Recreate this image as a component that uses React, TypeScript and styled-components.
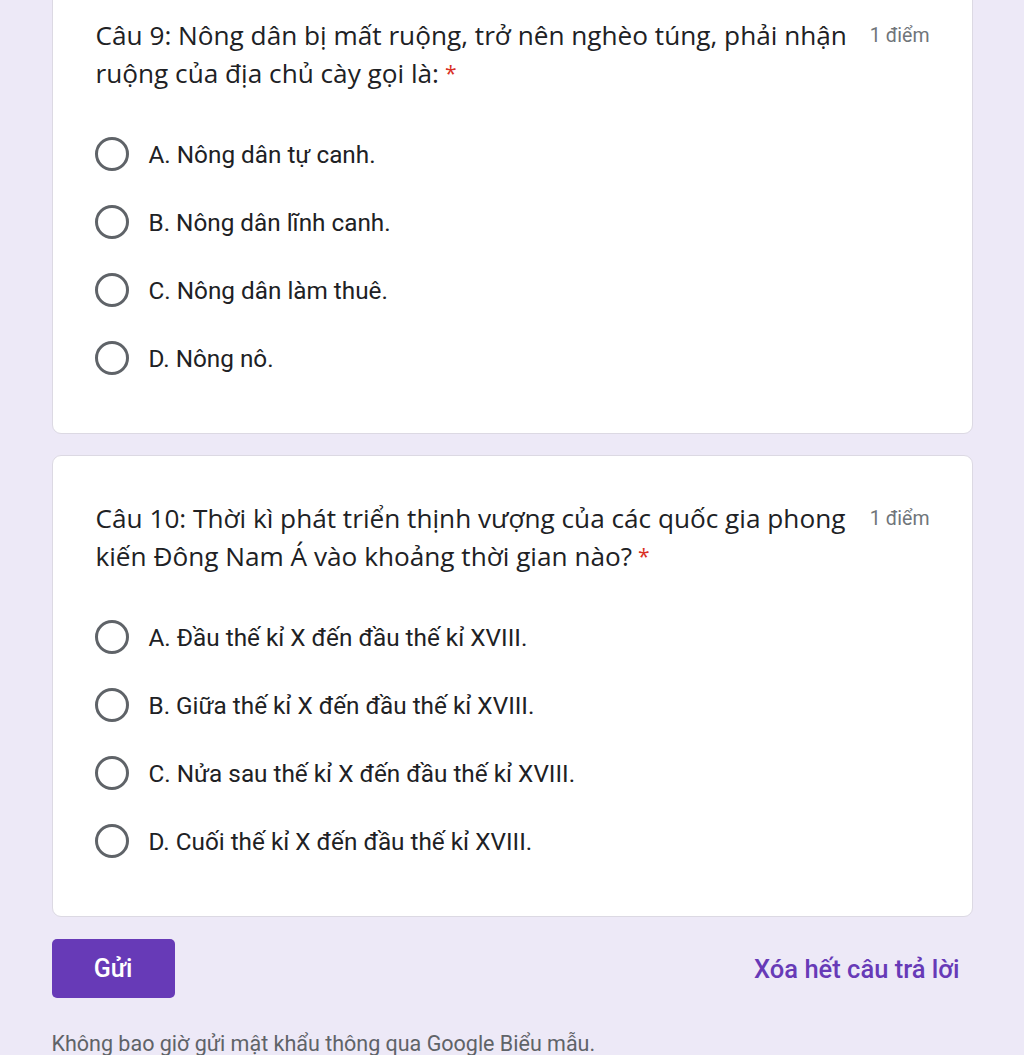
import React from "react";
import styled, { createGlobalStyle } from "styled-components";

const Global = createGlobalStyle`
  html, body { margin: 0; padding: 0; background: #ede9f7; }
  body { overflow: hidden; }
  * { box-sizing: border-box; }
`;

const Page = styled.div`
  width: 1024px;
  height: 1055px;
  overflow: hidden;
  background: #ede9f7;
`;

const Column = styled.div`
  width: 921px;
  margin: -28px auto 0;
  display: flex;
  flex-direction: column;
  gap: 21px;
`;

const Card = styled.section`
  background: #ffffff;
  border: 1px solid #dcd9e3;
  border-radius: 9px;
  padding: 43px 42px 41px 42px;
  display: flex;
  flex-direction: column;
  gap: 28px;
`;

const Header = styled.div`
  display: flex;
  align-items: flex-start;
  justify-content: space-between;
  gap: 14px;
`;

const Title = styled.div`
  flex: 1;
  font-family: "Open Sans", Lato, sans-serif;
  font-size: 26.2px;
  line-height: 38px;
  color: #202124;
  padding-left: 1px;
`;

const Required = styled.span`
  color: #d93025;
  margin-left: 6px;
  font-size: 21px;
  vertical-align: 2px;
`;

const Points = styled.div`
  font-family: Roboto, "Liberation Sans", sans-serif;
  font-size: 19.5px;
  line-height: 38px;
  color: #70757a;
  white-space: nowrap;
  padding-top: 1px;
`;

const Options = styled.div`
  display: flex;
  flex-direction: column;
`;

const Option = styled.label`
  height: 68px;
  display: flex;
  align-items: center;
  gap: 20px;
  cursor: pointer;
`;

const Radio = styled.span`
  width: 34px;
  height: 34px;
  border-radius: 50%;
  border: 3px solid #5f6368;
  flex: none;
`;

const OptionText = styled.span`
  font-family: Roboto, "Liberation Sans", sans-serif;
  font-size: 24.3px;
  color: #202124;
`;

const Actions = styled.div`
  margin-top: 1px;
  display: flex;
  align-items: center;
  justify-content: space-between;
  padding-right: 13px;
`;

const SubmitButton = styled.button`
  width: 123px;
  height: 59px;
  border: none;
  border-radius: 5px;
  background: #673ab7;
  color: #ffffff;
  font-family: Roboto, "Liberation Sans", sans-serif;
  font-size: 25px;
  font-weight: 500;
  cursor: pointer;
`;

const ClearLink = styled.span`
  font-family: Roboto, "Liberation Sans", sans-serif;
  font-size: 25.5px;
  font-weight: 500;
  color: #673ab7;
`;

const Footer = styled.div`
  margin-top: 26px;
  font-family: Roboto, "Liberation Sans", sans-serif;
  font-size: 21.5px;
  line-height: 40px;
  color: #5f6368;
`;

type Q = { title: string; options: string[] };

const questions: Q[] = [
  {
    title:
      "Câu 9: Nông dân bị mất ruộng, trở nên nghèo túng, phải nhận ruộng của địa chủ cày gọi là:",
    options: [
      "A. Nông dân tự canh.",
      "B. Nông dân lĩnh canh.",
      "C. Nông dân làm thuê.",
      "D. Nông nô.",
    ],
  },
  {
    title:
      "Câu 10: Thời kì phát triển thịnh vượng của các quốc gia phong kiến Đông Nam Á vào khoảng thời gian nào?",
    options: [
      "A. Đầu thế kỉ X đến đầu thế kỉ XVIII.",
      "B. Giữa thế kỉ X đến đầu thế kỉ XVIII.",
      "C. Nửa sau thế kỉ X đến đầu thế kỉ XVIII.",
      "D. Cuối thế kỉ X đến đầu thế kỉ XVIII.",
    ],
  },
];

export default function App() {
  return (
    <Page>
      <Global />
      <Column>
        {questions.map((q) => (
          <Card key={q.title}>
            <Header>
              <Title>
                {q.title}
                <Required>*</Required>
              </Title>
              <Points>1 điểm</Points>
            </Header>
            <Options>
              {q.options.map((o) => (
                <Option key={o}>
                  <Radio />
                  <OptionText>{o}</OptionText>
                </Option>
              ))}
            </Options>
          </Card>
        ))}
        <div>
          <Actions>
            <SubmitButton>Gửi</SubmitButton>
            <ClearLink>Xóa hết câu trả lời</ClearLink>
          </Actions>
          <Footer>Không bao giờ gửi mật khẩu thông qua Google Biểu mẫu.</Footer>
        </div>
      </Column>
    </Page>
  );
}
